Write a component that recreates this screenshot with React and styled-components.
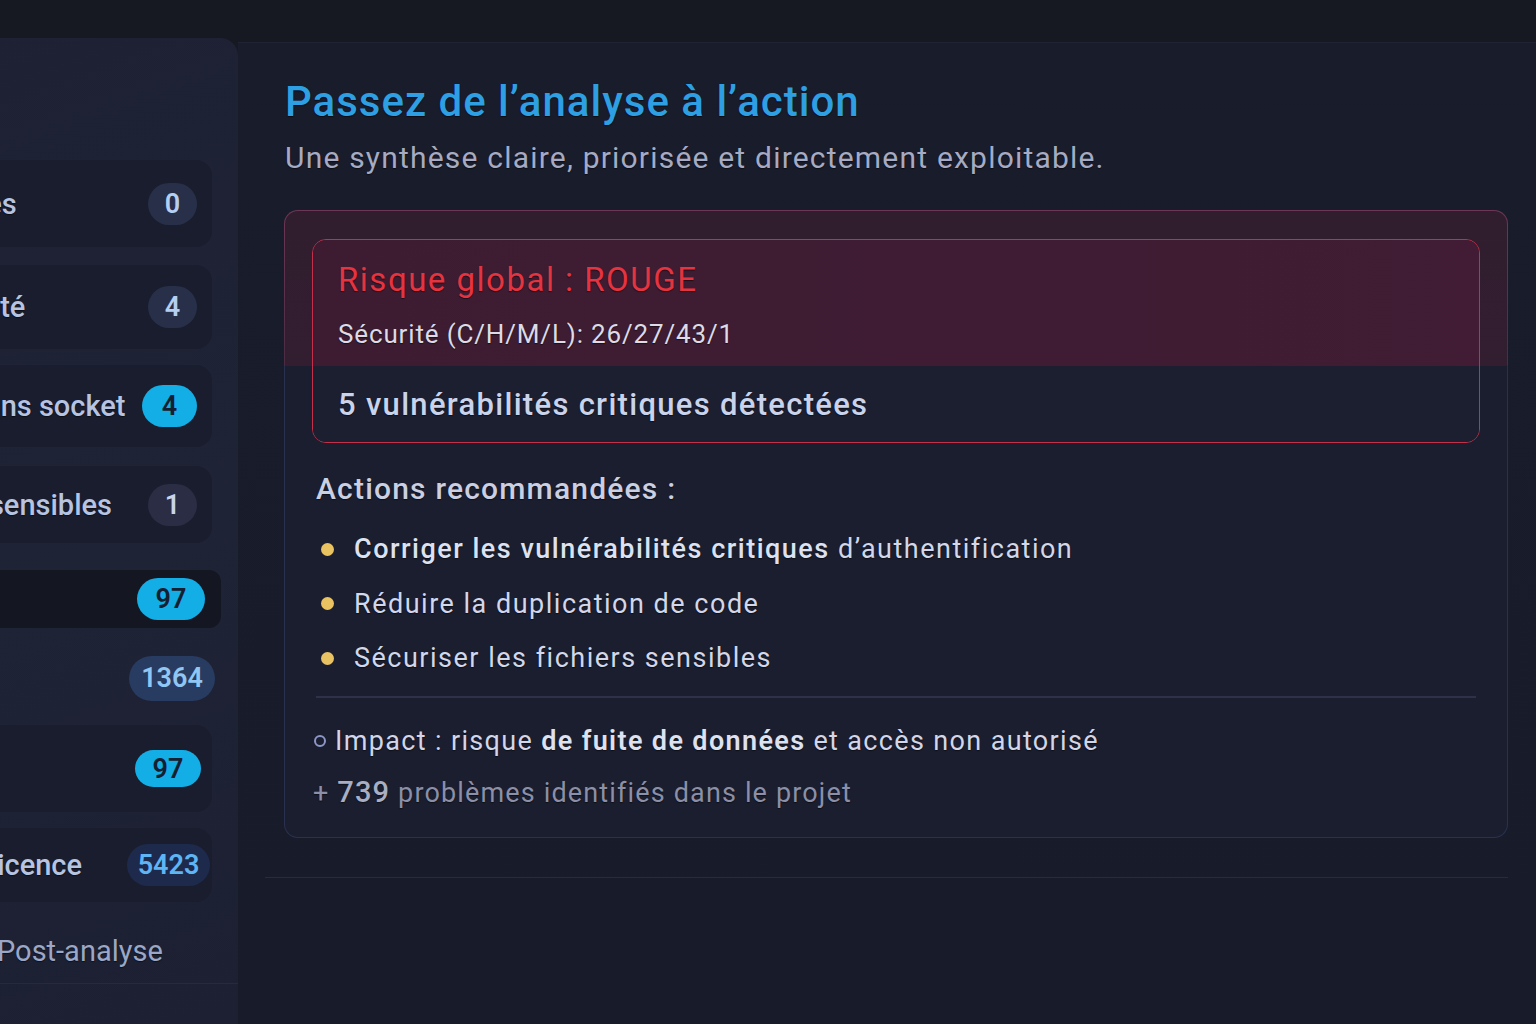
import React from "react";
import styled, { createGlobalStyle, css } from "styled-components";

const Global = createGlobalStyle`
  html, body { margin: 0; padding: 0; background: #161822; }
  body { font-family: Roboto, "Noto Sans", "Liberation Sans", sans-serif; }
  * { box-sizing: border-box; }
`;

const Page = styled.div`
  width: 1536px;
  height: 1024px;
  overflow: hidden;
  display: grid;
  grid-template-columns: 238px 1fr;
  padding-top: 38px;
  background: #161822;
`;

const Sidebar = styled.aside`
  margin-left: -200px;
  width: 438px;
  height: 100%;
  border-top-right-radius: 18px;
  background: linear-gradient(160deg, #1d2133 0%, #1f2336 55%, #1c2032 100%);
  padding-top: 122px;
  display: flex;
  flex-direction: column;
`;

const Item = styled.div`
  display: flex;
  align-items: center;
  height: ${(p) => p.$h}px;
  margin-top: ${(p) => p.$mt}px;
  margin-left: 60px;
  margin-right: ${(p) => p.$mr}px;
  padding-left: 19px;
  padding-right: ${(p) => p.$pr}px;
  border-radius: 16px;
  ${(p) =>
    p.$variant === "card" &&
    css`
      background: #1a1d2d;
    `}
  ${(p) =>
    p.$variant === "active" &&
    css`
      background: #141622;
      border-radius: 12px;
    `}
`;

const Label = styled.span`
  flex: 1;
  font-size: 29px;
  font-weight: 500;
  color: #b6c4e2;
  white-space: nowrap;
  text-shadow: 0 1px 1px rgba(0, 0, 0, 0.5);
`;

const badgeTones = {
  muted: css`background: #283049; color: #b5cff2;`,
  cyan: css`background: #14aee6; color: #142032;`,
  grey: css`background: #2a2d44; color: #cad3ec;`,
  navy: css`background: #283b60; color: #90c6f3;`,
  deep: css`background: #1e2a4c; color: #5eb5f4;`,
};

const Badge = styled.span`
  display: inline-flex;
  align-items: center;
  justify-content: center;
  width: ${(p) => p.$w}px;
  height: ${(p) => p.$bh || 42}px;
  border-radius: 999px;
  font-size: 27px;
  font-weight: 600;
  flex-shrink: 0;
  ${(p) => badgeTones[p.$tone]}
`;

const SideSection = styled.div`
  margin-top: 32px;
  margin-left: 60px;
  padding: 0 0 15px 137px;
  border-bottom: 1px solid #262a3e;
  font-size: 29px;
  line-height: 34px;
  color: #9ba7c6;
  text-shadow: 0 1px 1px rgba(0, 0, 0, 0.5);
`;

const Main = styled.main`
  margin-top: 4px;
  background: linear-gradient(180deg, #191c2b 0%, #181b29 100%);
  border-top: 1px solid #1f2334;
  padding-right: 28px;
`;

const Section = styled.section`
  margin-left: 27px;
  padding: 34px 0 39px 20px;
  border-bottom: 1px solid #252b42;
`;

const Title = styled.h1`
  margin: 0;
  font-size: 42px;
  line-height: 50px;
  font-weight: 500;
  letter-spacing: 1px;
  color: #2e9fe2;
  text-shadow: 0 1px 1px rgba(0, 0, 0, 0.6);
`;

const Subtitle = styled.p`
  margin: 13px 0 0;
  font-size: 30px;
  line-height: 36px;
  letter-spacing: 1.2px;
  color: #a6aac2;
  text-shadow: 0 1px 1px rgba(0, 0, 0, 0.5);
`;

const Card = styled.div`
  margin: 34px 0 0 -1px;
  border: 1px solid transparent;
  border-radius: 14px;
  background:
    linear-gradient(180deg, #301d2e 0, #321e30 155px, #1b1e2e 155px) padding-box,
    linear-gradient(180deg, #6e3656 0, #4c2c44 155px, #2a3150 155px) border-box;
  padding: 28px 27px 26px 27px;
`;

const Risk = styled.div`
  border: 1.5px solid #c4304a;
  border-radius: 14px;
  overflow: hidden;
`;

const RiskHead = styled.div`
  height: 126px;
  padding: 20px 25px 0;
  background: linear-gradient(90deg, #3d1c32 0%, #411c34 100%);
`;

const RiskTitle = styled.div`
  font-size: 33px;
  line-height: 40px;
  letter-spacing: 1.5px;
  color: #e5343f;
  text-shadow: 0 1px 1px rgba(0, 0, 0, 0.5);
`;

const RiskStats = styled.div`
  margin-top: 18px;
  font-size: 26px;
  line-height: 32px;
  letter-spacing: 0.85px;
  color: #dcdbe6;
  text-shadow: 0 1px 1px rgba(0, 0, 0, 0.5);
`;

const RiskFoot = styled.div`
  padding: 20px 25px 18px;
  background: #1c1f30;
  font-size: 31px;
  line-height: 38px;
  font-weight: 500;
  letter-spacing: 1.3px;
  color: #c9d3ec;
  text-shadow: 0 1px 1px rgba(0, 0, 0, 0.5);
`;

const Body = styled.div`
  padding-left: 4px;
`;

const ActionsTitle = styled.h2`
  margin: 28px 0 0;
  font-size: 30px;
  line-height: 36px;
  font-weight: 500;
  letter-spacing: 1.2px;
  color: #cbcfe2;
  text-shadow: 0 1px 1px rgba(0, 0, 0, 0.5);
`;

const List = styled.ul`
  list-style: none;
  margin: 24px 0 0;
  padding: 0;
  display: flex;
  flex-direction: column;
  gap: 18.5px;
`;

const ListItem = styled.li`
  display: flex;
  align-items: center;
  gap: 20px;
  padding-left: 5px;
  font-size: 27px;
  line-height: 36px;
  letter-spacing: 1.5px;
  color: #d2d7ea;
  text-shadow: 0 1px 1px rgba(0, 0, 0, 0.5);
  b { font-weight: 500; color: #dde2f2; }
`;

const Dot = styled.span`
  width: 13px;
  height: 13px;
  border-radius: 50%;
  background: #e9c262;
  flex-shrink: 0;
`;

const Divider = styled.hr`
  margin: 20px 4px 0 0;
  border: 0;
  height: 2px;
  background: #2e3248;
`;

const Impact = styled.div`
  margin-top: 25px;
  margin-left: -2px;
  display: flex;
  align-items: center;
  gap: 9px;
  font-size: 27px;
  line-height: 36px;
  letter-spacing: 1.35px;
  color: #d2d6e8;
  text-shadow: 0 1px 1px rgba(0, 0, 0, 0.5);
  b { font-weight: 600; color: #dde1f0; }
`;

const Ring = styled.span`
  width: 12px;
  height: 12px;
  border-radius: 50%;
  border: 2px solid #8c97c8;
  flex-shrink: 0;
`;

const Extra = styled.div`
  margin-top: 15px;
  margin-left: -3px;
  font-size: 27px;
  line-height: 36px;
  letter-spacing: 1.15px;
  color: #8b8fa7;
  text-shadow: 0 1px 1px rgba(0, 0, 0, 0.5);
  b { font-size: 29px; font-weight: 500; color: #a9aec3; }
`;

const items = [
  { label: "Anomalies", n: "0", tone: "muted", w: 49, h: 87, mt: 0, mr: 26, pr: 15, v: "card" },
  { label: "Conformité", n: "4", tone: "muted", w: 49, h: 84, mt: 18, mr: 26, pr: 15, v: "card" },
  { label: "Connexions socket", n: "4", tone: "cyan", w: 55, h: 82, mt: 16, mr: 26, pr: 15, v: "card" },
  { label: "Fichiers sensibles", n: "1", tone: "grey", w: 49, h: 77, mt: 19, mr: 26, pr: 15, v: "card" },
  { label: "Dettes", n: "97", tone: "cyan", w: 68, h: 58, mt: 27, mr: 17, pr: 16, v: "active" },
  { label: "Défauts :", n: "1364", tone: "navy", w: 86, bh: 45, h: 64, mt: 18, mr: 23, pr: 0, v: "plain" },
  { label: "Tâches", n: "97", tone: "cyan", w: 66, bh: 37, h: 87, mt: 15, mr: 26, pr: 11, v: "card" },
  { label: "Risques licence", n: "5423", tone: "deep", w: 83, h: 74, mt: 16, mr: 26, pr: 2, v: "card" },
];

export default function App() {
  return (
    <>
      <Global />
      <Page>
        <Sidebar>
          {items.map((it) => (
            <Item key={it.label} $h={it.h} $mt={it.mt} $mr={it.mr} $pr={it.pr} $variant={it.v}>
              <Label>{it.label}</Label>
              <Badge $tone={it.tone} $w={it.w} $bh={it.bh}>{it.n}</Badge>
            </Item>
          ))}
          <SideSection>Post-analyse</SideSection>
        </Sidebar>
        <Main>
          <Section>
            <Title>Passez de l’analyse à l’action</Title>
            <Subtitle>Une synthèse claire, priorisée et directement exploitable.</Subtitle>
            <Card>
              <Risk>
                <RiskHead>
                  <RiskTitle>Risque global : ROUGE</RiskTitle>
                  <RiskStats>Sécurité (C/H/M/L): 26/27/43/1</RiskStats>
                </RiskHead>
                <RiskFoot>5 vulnérabilités critiques détectées</RiskFoot>
              </Risk>
              <Body>
                <ActionsTitle>Actions recommandées :</ActionsTitle>
                <List>
                  <ListItem>
                    <Dot />
                    <span>
                      <b>Corriger les vulnérabilités critiques</b> d’authentification
                    </span>
                  </ListItem>
                  <ListItem>
                    <Dot />
                    <span>Réduire la duplication de code</span>
                  </ListItem>
                  <ListItem>
                    <Dot />
                    <span>Sécuriser les fichiers sensibles</span>
                  </ListItem>
                </List>
                <Divider />
                <Impact>
                  <Ring />
                  <span>
                    Impact : risque <b>de fuite de données</b> et accès non autorisé
                  </span>
                </Impact>
                <Extra>
                  + <b>739</b> problèmes identifiés dans le projet
                </Extra>
              </Body>
            </Card>
          </Section>
        </Main>
      </Page>
    </>
  );
}
